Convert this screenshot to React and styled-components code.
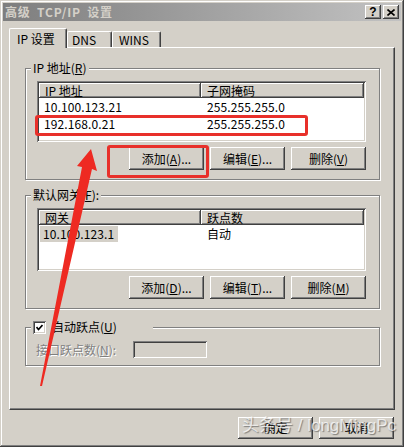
import styled, { createGlobalStyle } from "styled-components";

const GlobalStyle = createGlobalStyle`
  html, body { margin: 0; padding: 0; background: #d4d0c8; }
  body {
    font-family: "Noto Sans CJK SC", "Noto Sans", sans-serif;
    font-size: 12px;
    line-height: 14px;
    color: #000;
  }
  * { box-sizing: border-box; }
`;

const raised = `
  box-shadow: inset -1px -1px #404040, inset 1px 1px #fff,
    inset -2px -2px #808080, inset 2px 2px #d4d0c8;
`;

const sunken = `
  box-shadow: inset 1px 1px #808080, inset -1px -1px #fff,
    inset 2px 2px #404040, inset -2px -2px #d4d0c8;
`;

const Window = styled.div`
  position: relative;
  width: 404px;
  height: 447px;
  padding: 3px;
  background: #d4d0c8;
  box-shadow: inset -1px -1px #404040, inset 1px 1px #d4d0c8,
    inset -2px -2px #808080, inset 2px 2px #fff;
  display: flex;
  flex-direction: column;
  overflow: hidden;
`;

const TitleBar = styled.div`
  height: 18px;
  display: flex;
  align-items: center;
  justify-content: space-between;
  padding: 0 2px 0 2px;
  background: linear-gradient(90deg, #7e7e7e, #c2c2c2);
`;

const Title = styled.span`
  color: #d4d0c8;
  font-weight: bold;
  letter-spacing: 0.8px;
  word-spacing: 3px;
`;

const CaptionButtons = styled.div`
  display: flex;
  gap: 2px;
`;

const CaptionButton = styled.div`
  width: 16px;
  height: 14px;
  background: #d4d0c8;
  ${raised}
  display: flex;
  align-items: center;
  justify-content: center;
  font-family: "Liberation Sans", sans-serif;
  font-weight: bold;
  font-size: 12px;
  line-height: 12px;
`;

const Body = styled.div`
  padding: 7px 6px 0 6px;
  display: flex;
  flex-direction: column;
`;

const TabStrip = styled.div`
  display: flex;
  align-items: flex-end;
  height: 19px;
  position: relative;
  z-index: 1;
`;

const Tab = styled.div`
  width: ${(p) => p.$w}px;
  height: ${(p) => (p.$active ? 20 : 16)}px;
  margin-bottom: ${(p) => (p.$active ? -1 : 0)}px;
  padding-left: ${(p) => p.$pad}px;
  padding-top: ${(p) => (p.$active ? 3 : 1)}px;
  background: #d4d0c8;
  border-top: 1px solid #fff;
  border-left: 1px solid #fff;
  border-right: 1px solid #404040;
  border-radius: 2px 2px 0 0;
  box-shadow: inset -1px 0 #808080;
  white-space: nowrap;
`;

const Panel = styled.div`
  height: 363px;
  border-top: 1px solid #fff;
  border-left: 1px solid #fff;
  border-right: 1px solid #404040;
  border-bottom: 1px solid #404040;
  box-shadow: inset -1px -1px #808080;
  padding: 13px 14px 0 15px;
  display: flex;
  flex-direction: column;
  gap: 8px;
`;

const Group = styled.fieldset`
  margin: ${(p) => p.$mt || 0}px 0 0 0;
  padding: 0;
  min-width: 0;
  border: 1px solid #808080;
  box-shadow: 1px 1px 0 #fff, inset 1px 1px 0 #fff;
`;

const Legend = styled.legend`
  margin-left: 5px;
  padding: 0 2px;
  background: #d4d0c8;
  height: 14px;
  white-space: nowrap;
`;

const CheckLegend = styled(Legend)`
  width: 122px;
  display: flex;
  align-items: center;
  gap: 6px;
`;

const GroupBody = styled.div`
  padding: ${(p) => p.$pad || "6px 13px 9px 11px"};
  display: flex;
  flex-direction: column;
`;

const ListView = styled.div`
  height: ${(p) => p.$h}px;
  background: #fff;
  ${sunken}
  padding: 2px;
  display: flex;
  flex-direction: column;
`;

const HeaderRow = styled.div`
  display: grid;
  grid-template-columns: 162px 1fr;
  height: 15px;
`;

const HeaderCell = styled.div`
  background: #d4d0c8;
  box-shadow: inset -1px -1px #404040, inset 1px 1px #fff,
    inset -2px -2px #808080;
  padding-left: 6px;
  line-height: 15px;
  white-space: nowrap;
`;

const Row = styled.div`
  display: grid;
  grid-template-columns: 162px 1fr;
  height: 17px;
  align-items: center;
`;

const Cell = styled.div`
  padding-left: ${(p) => p.$pad ?? 5}px;
  letter-spacing: 0.1px;
  white-space: nowrap;
`;

const Selected = styled.span`
  display: inline-block;
  background: #d4d0c8;
  padding: 1px 4px 1px 3px;
`;

const ButtonRow = styled.div`
  display: flex;
  justify-content: flex-end;
  gap: 6px;
  margin-top: ${(p) => p.$mt ?? 5}px;
  padding-right: ${(p) => p.$pr ?? 0}px;
`;

const Button = styled.button`
  width: ${(p) => p.$w || 75}px;
  height: ${(p) => p.$h || 23}px;
  padding: 0;
  border: none;
  background: #d4d0c8;
  ${raised}
  font: inherit;
  color: #000;
  white-space: nowrap;
`;

const FieldRow = styled.div`
  display: flex;
  align-items: center;
  gap: 17px;
`;

const DisabledLabel = styled.span`
  color: #808080;
  text-shadow: 1px 1px 0 #fff;
  white-space: nowrap;
`;

const DisabledInput = styled.div`
  width: 74px;
  height: 17px;
  background: #d4d0c8;
  ${sunken}
`;

const CheckBox = styled.span`
  width: 13px;
  height: 13px;
  flex: none;
  background: #fff;
  ${sunken}
  display: flex;
  align-items: center;
  justify-content: center;
`;

const RedBox = styled.div`
  position: absolute;
  left: ${(p) => p.$x}px;
  top: ${(p) => p.$y}px;
  width: ${(p) => p.$w}px;
  height: ${(p) => p.$h}px;
  border: 3px solid #e8302a;
  border-radius: 3px;
  pointer-events: none;
`;

const Arrow = styled.svg`
  position: absolute;
  left: 0;
  top: 0;
  pointer-events: none;
`;

const Watermark = styled.div`
  position: absolute;
  left: 242px;
  top: 415px;
  font-family: "Liberation Sans", "Noto Sans CJK SC", sans-serif;
  font-size: 17px;
  line-height: 22px;
  color: rgba(255, 255, 255, 0.72);
  text-shadow: 1px 1px 1px rgba(60, 60, 60, 0.55);
  white-space: nowrap;
  pointer-events: none;
`;

const App = () => {
  return (
    <>
      <GlobalStyle />
      <Window>
        <TitleBar>
          <Title>高级 TCP/IP 设置</Title>
          <CaptionButtons>
            <CaptionButton>?</CaptionButton>
            <CaptionButton>
              <svg width="8" height="7" viewBox="0 0 8 7">
                <path d="M0.5 0.5 L7.5 6.5 M7.5 0.5 L0.5 6.5" stroke="#000" strokeWidth="1.6" />
              </svg>
            </CaptionButton>
          </CaptionButtons>
        </TitleBar>

        <Body>
          <TabStrip>
            <Tab $active $w={58} $pad={7}>IP 设置</Tab>
            <Tab $w={45} $pad={4}>DNS</Tab>
            <Tab $w={49} $pad={6}>WINS</Tab>
          </TabStrip>

          <Panel>
            <Group>
              <Legend>IP 地址(<u>R</u>)</Legend>
              <GroupBody>
                <ListView $h={61}>
                  <HeaderRow>
                    <HeaderCell>IP 地址</HeaderCell>
                    <HeaderCell>子网掩码</HeaderCell>
                  </HeaderRow>
                  <Row>
                    <Cell>10.100.123.21</Cell>
                    <Cell $pad={6}>255.255.255.0</Cell>
                  </Row>
                  <Row>
                    <Cell>192.168.0.21</Cell>
                    <Cell $pad={6}>255.255.255.0</Cell>
                  </Row>
                </ListView>
                <ButtonRow>
                  <Button>添加(<u>A</u>)...</Button>
                  <Button>编辑(<u>E</u>)...</Button>
                  <Button>删除(<u>V</u>)</Button>
                </ButtonRow>
              </GroupBody>
            </Group>

            <Group>
              <Legend>默认网关(<u>F</u>):</Legend>
              <GroupBody>
                <ListView $h={63}>
                  <HeaderRow>
                    <HeaderCell>网关</HeaderCell>
                    <HeaderCell>跃点数</HeaderCell>
                  </HeaderRow>
                  <Row>
                    <Cell $pad={1}>
                      <Selected>10.100.123.1</Selected>
                    </Cell>
                    <Cell $pad={6}>自动</Cell>
                  </Row>
                </ListView>
                <ButtonRow>
                  <Button>添加(<u>D</u>)...</Button>
                  <Button>编辑(<u>T</u>)...</Button>
                  <Button>删除(<u>M</u>)</Button>
                </ButtonRow>
              </GroupBody>
            </Group>

            <Group $mt={3}>
              <CheckLegend>
                <CheckBox>
                  <svg width="7" height="7" viewBox="0 0 7 7">
                    <polyline points="0.5,3 2.5,5.5 6.5,1" fill="none" stroke="#000" strokeWidth="1.7" />
                  </svg>
                </CheckBox>
                <span>自动跃点(<u>U</u>)</span>
              </CheckLegend>
              <GroupBody $pad="7px 10px 7px 10px">
                <FieldRow>
                  <DisabledLabel>接口跃点数(<u>N</u>):</DisabledLabel>
                  <DisabledInput />
                </FieldRow>
              </GroupBody>
            </Group>
          </Panel>

          <ButtonRow $mt={7} $pr={1}>
            <Button $w={75} $h={22}>确定</Button>
            <Button $w={75} $h={22}>取消</Button>
          </ButtonRow>
        </Body>

        <RedBox $x={35} $y={115} $w={273} $h={21} />
        <RedBox $x={107} $y={145} $w={102} $h={33} />
        <Arrow width="404" height="447" viewBox="0 0 404 447">
          <polygon
            points="91,149 97,171 92,169 42,386 40,386 82,167 77,166"
            fill="#ee2a22"
          />
        </Arrow>
        <Watermark>头条号 / longMingPc</Watermark>
      </Window>
    </>
  );
};

export default App;
